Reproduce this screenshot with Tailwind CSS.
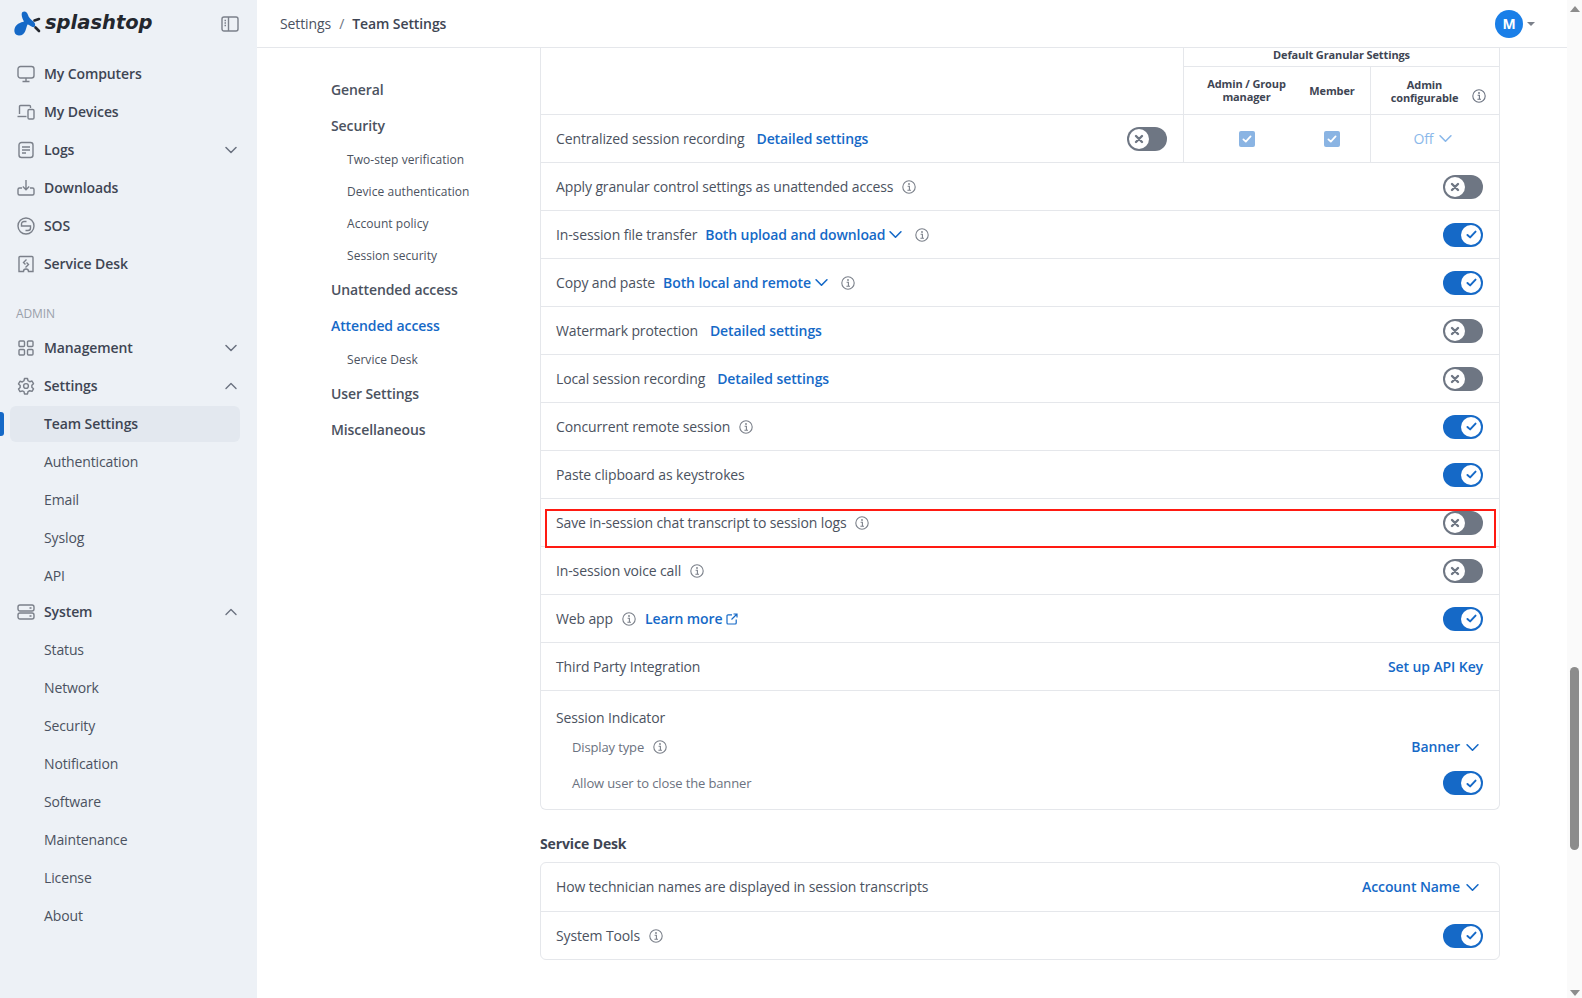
<!DOCTYPE html>
<html class="h-full w-full" lang="en">
    <head>
        <meta charset="UTF-8" />
        <meta name="viewport" content="width=device-width, initial-scale=1.0" />
        <title>Team Settings</title>
        <script src="https://cdn.jsdelivr.net/npm/@tailwindcss/browser@4"></script>
    </head>
    <body class="w-full h-full overflow-hidden bg-white text-[14px] leading-[20px] text-[#4b5260] font-['Open_Sans',sans-serif]">
        <!-- icon sprites -->
        <svg class="hidden">
            <symbol id="i-info" viewBox="0 0 14 14"><circle cx="7" cy="7" r="6.2" fill="none" stroke="currentColor" stroke-width="1.1"/><circle cx="7" cy="4" r="0.9" fill="currentColor"/><path d="M5.6 6.2H7.4V10M5.4 10.2H9" fill="none" stroke="currentColor" stroke-width="1.1"/></symbol>
            <symbol id="i-chev-down" viewBox="0 0 12 8"><path d="M1 1.5 6 6.5 11 1.5" fill="none" stroke="currentColor" stroke-width="1.5" stroke-linecap="round" stroke-linejoin="round"/></symbol>
            <symbol id="i-chev-up" viewBox="0 0 12 8"><path d="M1 6.5 6 1.5 11 6.5" fill="none" stroke="currentColor" stroke-width="1.4" stroke-linecap="round" stroke-linejoin="round"/></symbol>
            <symbol id="i-x" viewBox="0 0 10 10"><path d="M2 2 8 8M8 2 2 8" fill="none" stroke="currentColor" stroke-width="2.4" stroke-linecap="round"/></symbol>
            <symbol id="i-check" viewBox="0 0 12 10"><path d="M1.5 5.5 4.5 8.2 10.5 1.8" fill="none" stroke="currentColor" stroke-width="2.2" stroke-linecap="round" stroke-linejoin="round"/></symbol>
        </svg>

        <div class="flex h-full w-full">
            <!-- sidebar -->
            <aside class="w-[257px] shrink-0 h-full flex flex-col bg-[#edf1f6] text-[#3e4553]">
                <div class="h-[48px] flex items-center justify-between pl-[14px] pr-[18px] shrink-0">
                    <div class="flex items-center">
                        <svg class="w-[27px] h-[25px] mb-[1px]" viewBox="0 0 27 25"><path d="M8.500 1C11-.5 13.500 1.500 14 4 14.500 6.500 17 8.500 20 11 22 13 21.500 17 18.500 16 16.500 15 15 13.500 13.500 13.500 12 16 12 24.500 5 24.500 .5 24.500-.5 20 1 16.500 2.500 13 6.500 11.500 10 10.500 8.500 8 6.500 3 8.500 1Z" fill="#1569c7"/><path d="M20.500 9.500 25 8" stroke="#23272e" stroke-width="2.600" stroke-linecap="round"/><path d="M21.500 16.500 25 20" stroke="#23272e" stroke-width="2.600" stroke-linecap="round"/></svg>
                        <span class="ml-[4px] mb-[2px] text-[19.500px] leading-[28px] italic font-bold text-[#23272e] font-['DejaVu_Sans',sans-serif]">splashtop</span>
                    </div>
                    <svg class="w-[18px] h-[18px] text-[#7b808a]" viewBox="0 0 18 18" fill="none" stroke="currentColor" stroke-width="1.4"><rect x="1" y="2" width="16" height="14" rx="2"/><path d="M7.500 2v14M3.500 5.500h1.500M3.500 8h1.500M3.500 10.500h1.500"/></svg>
                </div>

                <nav class="pt-[7px] font-semibold tracking-[-0.1px]">
                    <a class="h-[38px] flex items-center pl-[17px]">
                        <svg class="w-[18px] h-[18px] text-[#7b808a] mr-[9px]" viewBox="0 0 18 18" fill="none" stroke="currentColor" stroke-width="1.4"><rect x="1" y="1.500" width="16" height="11.500" rx="2.500"/><path d="M9 13v3.500M5.500 16.500h7"/></svg>
                        My Computers
                    </a>
                    <a class="h-[38px] flex items-center pl-[17px]">
                        <svg class="w-[18px] h-[18px] text-[#7b808a] mr-[9px]" viewBox="0 0 18 18" fill="none" stroke="currentColor" stroke-width="1.4"><path d="M2.500 11V3.500a1 1 0 0 1 1-1h9a1 1 0 0 1 1 1V5"/><path d="M.5 13.500h9"/><rect x="11" y="6.500" width="6" height="9.500" rx="1.200"/></svg>
                        My Devices
                    </a>
                    <a class="h-[38px] flex items-center pl-[17px] pr-[20px]">
                        <svg class="w-[18px] h-[18px] text-[#7b808a] mr-[9px]" viewBox="0 0 18 18" fill="none" stroke="currentColor" stroke-width="1.4"><rect x="2" y="1.500" width="14" height="15" rx="2.500"/><path d="M5 6h8M5 9h8M5 12h4"/></svg>
                        Logs
                        <svg class="w-[12px] h-[8px] ml-auto text-[#6b7280]"><use href="#i-chev-down"/></svg>
                    </a>
                    <a class="h-[38px] flex items-center pl-[17px]">
                        <svg class="w-[18px] h-[18px] text-[#7b808a] mr-[9px]" viewBox="0 0 18 18" fill="none" stroke="currentColor" stroke-width="1.4"><path d="M9 1v9.500M5.800 7.500 9 10.700l3.200-3.200"/><path d="M5 9H2.500A1.500 1.500 0 0 0 1 10.500v4A1.500 1.500 0 0 0 2.500 16h13a1.500 1.500 0 0 0 1.500-1.500v-4A1.500 1.500 0 0 0 15.500 9H13"/></svg>
                        Downloads
                    </a>
                    <a class="h-[38px] flex items-center pl-[17px]">
                        <svg class="w-[18px] h-[18px] text-[#7b808a] mr-[9px]" viewBox="0 0 18 18" fill="none" stroke="currentColor" stroke-width="1.4"><circle cx="9" cy="9" r="8"/><path d="M9.500 4.500H7a2.500 2.500 0 0 0-2.500 2.500V9h9v2a2.500 2.500 0 0 1-2.500 2.500H8.500"/></svg>
                        SOS
                    </a>
                    <a class="h-[38px] flex items-center pl-[17px]">
                        <svg class="w-[18px] h-[18px] text-[#7b808a] mr-[9px]" viewBox="0 0 18 18" fill="none" stroke="currentColor" stroke-width="1.4"><path d="M3 1.500h12a1 1 0 0 1 1 1v14h-4.500a2.500 2.500 0 0 0-5 0H2v-14a1 1 0 0 1 1-1Z"/><path d="M9.500 4.500 6.500 7.500 8.500 9.500M8.500 12.500l3-3-2-2"/></svg>
                        Service Desk
                    </a>

                    <div class="mt-[21px] mb-[5px] pl-[16px] h-[20px] text-[12px] font-normal text-[#9aa0aa]">ADMIN</div>

                    <a class="h-[38px] flex items-center pl-[17px] pr-[20px]">
                        <svg class="w-[18px] h-[18px] text-[#7b808a] mr-[9px]" viewBox="0 0 18 18" fill="none" stroke="currentColor" stroke-width="1.4"><rect x="2" y="2" width="5.500" height="5.500" rx="1"/><rect x="10.500" y="2" width="5.500" height="5.500" rx="1"/><rect x="2" y="10.500" width="5.500" height="5.500" rx="1"/><rect x="10.500" y="10.500" width="5.500" height="5.500" rx="1"/></svg>
                        Management
                        <svg class="w-[12px] h-[8px] ml-auto text-[#6b7280]"><use href="#i-chev-down"/></svg>
                    </a>
                    <a class="h-[38px] flex items-center pl-[17px] pr-[20px]">
                        <svg class="w-[18px] h-[18px] text-[#7b808a] mr-[9px]" viewBox="0 0 24 24" fill="none" stroke="currentColor" stroke-width="1.900"><path d="M10 2h4l.7 3 2.300 1.300 3-.9 2 3.500-2.200 2.100v2.600l2.200 2.100-2 3.500-3-.9-2.300 1.300-.7 3h-4l-.7-3L7 18.600l-3 .9-2-3.500 2.200-2.100v-2.600L2 9.200l2-3.500 3 .9L9.300 5Z" stroke-linejoin="round"/><circle cx="12" cy="12" r="3.200"/></svg>
                        Settings
                        <svg class="w-[12px] h-[8px] ml-auto text-[#6b7280]"><use href="#i-chev-up"/></svg>
                    </a>
                    <div class="relative mt-[1px]">
                        <div class="absolute left-0 top-[6px] w-[4px] h-[24px] rounded-r-[3px] bg-[#1569c7]"></div>
                        <a class="h-[36px] mx-[10px] w-[230px] flex items-center pl-[34px] rounded-[6px] bg-[#e3e8ef]">Team Settings</a>
                    </div>
                    <div class="font-normal text-[#4b5260] tracking-[-0.13px]">
                        <a class="h-[38px] mt-[1px] flex items-center pl-[44px]">Authentication</a>
                        <a class="h-[38px] flex items-center pl-[44px]">Email</a>
                        <a class="h-[38px] flex items-center pl-[44px]">Syslog</a>
                        <a class="h-[38px] flex items-center pl-[44px]">API</a>
                    </div>
                    <a class="h-[38px] -mt-[2px] flex items-center pl-[17px] pr-[20px]">
                        <svg class="w-[18px] h-[18px] text-[#7b808a] mr-[9px]" viewBox="0 0 18 18" fill="none" stroke="currentColor" stroke-width="1.4"><rect x="1" y="2" width="16" height="6" rx="2"/><rect x="1" y="10" width="16" height="6" rx="2"/><path d="M12.500 5h2M12.500 13h2"/></svg>
                        System
                        <svg class="w-[12px] h-[8px] ml-auto text-[#6b7280]"><use href="#i-chev-up"/></svg>
                    </a>
                    <div class="font-normal text-[#4b5260] tracking-[-0.13px]">
                        <a class="h-[38px] flex items-center pl-[44px]">Status</a>
                        <a class="h-[38px] flex items-center pl-[44px]">Network</a>
                        <a class="h-[38px] flex items-center pl-[44px]">Security</a>
                        <a class="h-[38px] flex items-center pl-[44px]">Notification</a>
                        <a class="h-[38px] flex items-center pl-[44px]">Software</a>
                        <a class="h-[38px] flex items-center pl-[44px]">Maintenance</a>
                        <a class="h-[38px] flex items-center pl-[44px]">License</a>
                        <a class="h-[38px] flex items-center pl-[44px]">About</a>
                    </div>
                </nav>
            </aside>

            <!-- main column -->
            <div class="flex-1 min-w-0 flex flex-col h-full">
                <header class="h-[48px] shrink-0 flex items-center border-b border-[#e5e7eb] pl-[23px] pr-[32px]">
                    <span class="text-[#4b5260] tracking-[-0.1px]">Settings</span>
                    <span class="mx-[8px] text-[#6b7280]">/</span>
                    <span class="font-semibold text-[#3e4553] tracking-[-0.1px]">Team Settings</span>
                    <div class="ml-auto w-[28px] h-[28px] rounded-full bg-[#1a7fe8] text-white font-bold flex items-center justify-center">M</div>
                    <div class="ml-[4px] w-0 h-0 border-x-[4px] border-x-transparent border-t-[4px] border-t-[#7b808a]"></div>
                </header>

                <div class="flex flex-1 min-h-0 overflow-hidden">
                    <!-- settings sub nav -->
                    <nav class="w-[283px] shrink-0 pl-[74px] pt-[24px] font-semibold tracking-[-0.1px] text-[#4b5260]">
                        <a class="h-[36px] flex items-center">General</a>
                        <a class="h-[36px] flex items-center">Security</a>
                        <a class="h-[32px] flex items-center pl-[16px] text-[12px] font-medium tracking-[0.05px]">Two-step verification</a>
                        <a class="h-[32px] flex items-center pl-[16px] text-[12px] font-medium tracking-[0.05px]">Device authentication</a>
                        <a class="h-[32px] flex items-center pl-[16px] text-[12px] font-medium tracking-[0.05px]">Account policy</a>
                        <a class="h-[32px] flex items-center pl-[16px] text-[12px] font-medium tracking-[0.05px]">Session security</a>
                        <a class="h-[36px] flex items-center">Unattended access</a>
                        <a class="h-[36px] flex items-center text-[#1569c7]">Attended access</a>
                        <a class="h-[32px] flex items-center pl-[16px] text-[12px] font-medium tracking-[0.05px]">Service Desk</a>
                        <a class="h-[36px] flex items-center">User Settings</a>
                        <a class="h-[36px] flex items-center">Miscellaneous</a>
                    </nav>

                    <!-- settings table -->
                    <div class="w-[960px] shrink-0 tracking-[-0.13px]">
                        <div class="relative border-x border-b border-[#e5e7eb] rounded-b-[6px]">
                            <div class="h-[67px] flex border-b border-[#e5e7eb]">
                                <div class="flex-1"></div>
                                <div class="w-[316px] border-l border-[#e5e7eb] flex flex-col text-[11px] leading-[13px] font-bold text-[#3e4553]">
                                    <div class="h-[19px] border-b border-[#e5e7eb] text-center">Default Granular Settings</div>
                                    <div class="flex-1 flex">
                                        <div class="w-[125px] pb-[2px] flex items-center justify-center text-center">Admin / Group<br />manager</div>
                                        <div class="w-[46px] mr-[15px] flex items-center justify-center">Member</div>
                                        <div class="flex-1 border-l border-[#e5e7eb] flex items-center justify-center relative pr-[21px]">
                                            <span class="text-center">Admin<br />configurable</span>
                                            <svg class="absolute right-[13px] top-[22px] w-[14px] h-[14px] text-[#6b7280]"><use href="#i-info"/></svg>
                                        </div>
                                    </div>
                                </div>
                            </div>

                            <div class="h-[48px] flex border-b border-[#e5e7eb]">
                                <div class="flex-1 flex items-center pl-[15px] pr-[16px]">
                                    Centralized session recording
                                    <a class="ml-[12px] font-semibold text-[#1569c7] tracking-[-0.1px]">Detailed settings</a>
                                    <div class="ml-auto w-[40px] h-[24px] rounded-full bg-[#6e7683] flex items-center px-[2px]"><span class="w-[20px] h-[20px] rounded-full bg-white flex items-center justify-center text-[#6e7683]"><svg class="w-[10px] h-[10px]"><use href="#i-x"/></svg></span></div>
                                </div>
                                <div class="w-[316px] border-l border-[#e5e7eb] flex items-center">
                                    <div class="w-[125px] flex justify-center"><span class="w-[16px] h-[16px] rounded-[2px] bg-[#8ab4e3] text-white flex items-center justify-center"><svg class="w-[10px] h-[8px]"><use href="#i-check"/></svg></span></div>
                                    <div class="w-[46px] mr-[15px] flex justify-center"><span class="w-[16px] h-[16px] rounded-[2px] bg-[#8ab4e3] text-white flex items-center justify-center"><svg class="w-[10px] h-[8px]"><use href="#i-check"/></svg></span></div>
                                    <div class="flex-1 self-stretch border-l border-[#e5e7eb] flex items-center justify-center text-[#8ab8ea] pr-[4px]">
                                        Off
                                        <svg class="ml-[6px] w-[13px] h-[9px]"><use href="#i-chev-down"/></svg>
                                    </div>
                                </div>
                            </div>

                            <div class="h-[48px] flex items-center pl-[15px] pr-[16px] border-b border-[#e5e7eb]">
                                Apply granular control settings as unattended access
                                <svg class="ml-[9px] w-[14px] h-[14px] text-[#7b808a]"><use href="#i-info"/></svg>
                                <div class="ml-auto w-[40px] h-[24px] rounded-full bg-[#6e7683] flex items-center px-[2px]"><span class="w-[20px] h-[20px] rounded-full bg-white flex items-center justify-center text-[#6e7683]"><svg class="w-[10px] h-[10px]"><use href="#i-x"/></svg></span></div>
                            </div>
                            <div class="h-[48px] flex items-center pl-[15px] pr-[16px] border-b border-[#e5e7eb]">
                                In-session file transfer
                                <a class="ml-[8px] font-semibold text-[#1569c7] tracking-[-0.1px]">Both upload and download</a>
                                <svg class="ml-[4px] w-[13px] h-[9px] text-[#1569c7]"><use href="#i-chev-down"/></svg>
                                <svg class="ml-[13px] w-[14px] h-[14px] text-[#7b808a]"><use href="#i-info"/></svg>
                                <div class="ml-auto w-[40px] h-[24px] rounded-full bg-[#1569c7] flex items-center justify-end px-[2px]"><span class="w-[20px] h-[20px] rounded-full bg-white flex items-center justify-center text-[#1569c7]"><svg class="w-[11px] h-[9px]"><use href="#i-check"/></svg></span></div>
                            </div>
                            <div class="h-[48px] flex items-center pl-[15px] pr-[16px] border-b border-[#e5e7eb]">
                                Copy and paste
                                <a class="ml-[8px] font-semibold text-[#1569c7] tracking-[-0.1px]">Both local and remote</a>
                                <svg class="ml-[4px] w-[13px] h-[9px] text-[#1569c7]"><use href="#i-chev-down"/></svg>
                                <svg class="ml-[13px] w-[14px] h-[14px] text-[#7b808a]"><use href="#i-info"/></svg>
                                <div class="ml-auto w-[40px] h-[24px] rounded-full bg-[#1569c7] flex items-center justify-end px-[2px]"><span class="w-[20px] h-[20px] rounded-full bg-white flex items-center justify-center text-[#1569c7]"><svg class="w-[11px] h-[9px]"><use href="#i-check"/></svg></span></div>
                            </div>
                            <div class="h-[48px] flex items-center pl-[15px] pr-[16px] border-b border-[#e5e7eb]">
                                Watermark protection
                                <a class="ml-[12px] font-semibold text-[#1569c7] tracking-[-0.1px]">Detailed settings</a>
                                <div class="ml-auto w-[40px] h-[24px] rounded-full bg-[#6e7683] flex items-center px-[2px]"><span class="w-[20px] h-[20px] rounded-full bg-white flex items-center justify-center text-[#6e7683]"><svg class="w-[10px] h-[10px]"><use href="#i-x"/></svg></span></div>
                            </div>
                            <div class="h-[48px] flex items-center pl-[15px] pr-[16px] border-b border-[#e5e7eb]">
                                Local session recording
                                <a class="ml-[12px] font-semibold text-[#1569c7] tracking-[-0.1px]">Detailed settings</a>
                                <div class="ml-auto w-[40px] h-[24px] rounded-full bg-[#6e7683] flex items-center px-[2px]"><span class="w-[20px] h-[20px] rounded-full bg-white flex items-center justify-center text-[#6e7683]"><svg class="w-[10px] h-[10px]"><use href="#i-x"/></svg></span></div>
                            </div>
                            <div class="h-[48px] flex items-center pl-[15px] pr-[16px] border-b border-[#e5e7eb]">
                                Concurrent remote session
                                <svg class="ml-[9px] w-[14px] h-[14px] text-[#7b808a]"><use href="#i-info"/></svg>
                                <div class="ml-auto w-[40px] h-[24px] rounded-full bg-[#1569c7] flex items-center justify-end px-[2px]"><span class="w-[20px] h-[20px] rounded-full bg-white flex items-center justify-center text-[#1569c7]"><svg class="w-[11px] h-[9px]"><use href="#i-check"/></svg></span></div>
                            </div>
                            <div class="h-[48px] flex items-center pl-[15px] pr-[16px] border-b border-[#e5e7eb]">
                                Paste clipboard as keystrokes
                                <div class="ml-auto w-[40px] h-[24px] rounded-full bg-[#1569c7] flex items-center justify-end px-[2px]"><span class="w-[20px] h-[20px] rounded-full bg-white flex items-center justify-center text-[#1569c7]"><svg class="w-[11px] h-[9px]"><use href="#i-check"/></svg></span></div>
                            </div>
                            <div class="relative h-[48px] flex items-center pl-[15px] pr-[16px] border-b border-[#e5e7eb]">
                                Save in-session chat transcript to session logs
                                <svg class="ml-[9px] w-[14px] h-[14px] text-[#7b808a]"><use href="#i-info"/></svg>
                                <div class="ml-auto w-[40px] h-[24px] rounded-full bg-[#6e7683] flex items-center px-[2px]"><span class="w-[20px] h-[20px] rounded-full bg-white flex items-center justify-center text-[#6e7683]"><svg class="w-[10px] h-[10px]"><use href="#i-x"/></svg></span></div>
                                <!-- red annotation box -->
                                <div class="absolute left-[4px] right-[3px] top-[10px] h-[39px] border-2 border-[#ff1a12]"></div>
                            </div>
                            <div class="h-[48px] flex items-center pl-[15px] pr-[16px] border-b border-[#e5e7eb]">
                                In-session voice call
                                <svg class="ml-[9px] w-[14px] h-[14px] text-[#7b808a]"><use href="#i-info"/></svg>
                                <div class="ml-auto w-[40px] h-[24px] rounded-full bg-[#6e7683] flex items-center px-[2px]"><span class="w-[20px] h-[20px] rounded-full bg-white flex items-center justify-center text-[#6e7683]"><svg class="w-[10px] h-[10px]"><use href="#i-x"/></svg></span></div>
                            </div>
                            <div class="h-[48px] flex items-center pl-[15px] pr-[16px] border-b border-[#e5e7eb]">
                                Web app
                                <svg class="ml-[9px] w-[14px] h-[14px] text-[#7b808a]"><use href="#i-info"/></svg>
                                <a class="ml-[9px] font-semibold text-[#1569c7] tracking-[-0.1px]">Learn more</a>
                                <svg class="ml-[4px] w-[12px] h-[12px] text-[#1569c7]" viewBox="0 0 12 12" fill="none" stroke="currentColor" stroke-width="1.200"><path d="M6 1.800H2a1 1 0 0 0-1 1V10a1 1 0 0 0 1 1h7.200a1 1 0 0 0 1-1V6.500"/><path d="M5.500 6.500 11 1M7.500 1H11v3.500"/></svg>
                                <div class="ml-auto w-[40px] h-[24px] rounded-full bg-[#1569c7] flex items-center justify-end px-[2px]"><span class="w-[20px] h-[20px] rounded-full bg-white flex items-center justify-center text-[#1569c7]"><svg class="w-[11px] h-[9px]"><use href="#i-check"/></svg></span></div>
                            </div>
                            <div class="h-[48px] flex items-center justify-between pl-[15px] pr-[16px] border-b border-[#e5e7eb]">
                                Third Party Integration
                                <a class="font-semibold text-[#1569c7] tracking-[-0.1px]">Set up API Key</a>
                            </div>
                            <div class="h-[118px] pl-[15px] pr-[16px] pt-[17px]">
                                <div class="h-[20px] flex items-center">Session Indicator</div>
                                <div class="h-[36px] mt-[1px] pl-[16px] flex items-center text-[13px] text-[#6b7280]">
                                    Display type
                                    <svg class="ml-[9px] w-[14px] h-[14px] text-[#7b808a]"><use href="#i-info"/></svg>
                                    <a class="ml-auto text-[14px] font-semibold text-[#1569c7] tracking-[-0.1px]">Banner</a>
                                    <svg class="ml-[6px] mr-[4px] w-[13px] h-[9px] text-[#1569c7]"><use href="#i-chev-down"/></svg>
                                </div>
                                <div class="h-[36px] pl-[16px] flex items-center text-[13px] text-[#6b7280]">
                                    Allow user to close the banner
                                    <div class="ml-auto w-[40px] h-[24px] rounded-full bg-[#1569c7] flex items-center justify-end px-[2px]"><span class="w-[20px] h-[20px] rounded-full bg-white flex items-center justify-center text-[#1569c7]"><svg class="w-[11px] h-[9px]"><use href="#i-check"/></svg></span></div>
                                </div>
                            </div>
                        </div>

                        <h3 class="mt-[24px] h-[20px] flex items-center font-bold text-[#3e4553]">Service Desk</h3>
                        <div class="mt-[8px] border border-[#e5e7eb] rounded-[6px]">
                            <div class="h-[49px] flex items-center pl-[15px] pr-[16px] border-b border-[#e5e7eb]">
                                How technician names are displayed in session transcripts
                                <a class="ml-auto font-semibold text-[#1569c7] tracking-[-0.1px]">Account Name</a>
                                <svg class="ml-[6px] mr-[4px] w-[13px] h-[9px] text-[#1569c7]"><use href="#i-chev-down"/></svg>
                            </div>
                            <div class="h-[47px] flex items-center pl-[15px] pr-[16px]">
                                System Tools
                                <svg class="ml-[9px] w-[14px] h-[14px] text-[#7b808a]"><use href="#i-info"/></svg>
                                <div class="ml-auto w-[40px] h-[24px] rounded-full bg-[#1569c7] flex items-center justify-end px-[2px]"><span class="w-[20px] h-[20px] rounded-full bg-white flex items-center justify-center text-[#1569c7]"><svg class="w-[11px] h-[9px]"><use href="#i-check"/></svg></span></div>
                            </div>
                        </div>
                    </div>
                </div>
            </div>

            <!-- scrollbar -->
            <div class="relative w-[15px] shrink-0 h-full bg-[#fafafa]">
                <div class="absolute left-[3px] top-[6px] w-0 h-0 border-x-[5px] border-x-transparent border-b-[6px] border-b-[#8c8c8c]"></div>
                <div class="absolute left-[3px] top-[667px] w-[9px] h-[183px] rounded-[5px] bg-[#8c8c8c]"></div>
                <div class="absolute left-[3px] bottom-[2px] w-0 h-0 border-x-[5px] border-x-transparent border-t-[6px] border-t-[#8c8c8c]"></div>
            </div>
        </div>
    </body>
</html>
